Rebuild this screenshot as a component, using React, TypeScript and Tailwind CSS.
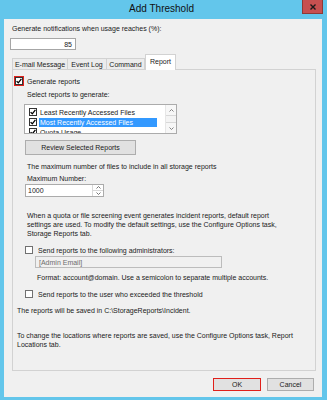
import React from 'react';

function Check({ red = false, checked = true }: { red?: boolean; checked?: boolean }) {
  return (
    <div
      className={
        'w-[8px] h-[8px] bg-white flex items-center justify-center shrink-0 ' +
        (red ? 'outline outline-[1.5px] outline-[#e0201b] border border-[#333]' : 'border border-[#333]')
      }
    >
      {checked && (
        <svg width="6" height="6" viewBox="0 0 6 6">
          <path d="M0.6 3.1 L2.3 4.8 L5.4 0.9" fill="none" stroke="#000" strokeWidth="1.3" />
        </svg>
      )}
    </div>
  );
}

function EmptyBox() {
  return <div className="w-[8px] h-[8px] bg-white border border-[#707070] shrink-0" />;
}

export default function App() {
  return (
    <div
      className="w-[327px] h-[400px] bg-[#63c6eb] flex flex-col text-[7px] text-[#1a1a1a] overflow-hidden"
      style={{ fontFamily: '"Liberation Sans", Arial, sans-serif' }}
    >
      {/* Title bar */}
      <div className="h-[19px] flex items-start shrink-0">
        <div className="flex-1" />
        <div className="text-[10px] leading-[18px] text-[#111]">Add Threshold</div>
        <div className="flex-1 flex justify-end pr-[4px]">
          <div className="w-[21px] h-[14px] bg-[#c75050] border border-[#8e3a36] border-t-0 flex items-center justify-center">
            <svg width="6" height="6" viewBox="0 0 6 6">
              <path d="M0.5 0.5 L5.5 5.5 M5.5 0.5 L0.5 5.5" stroke="#1a1a1a" strokeWidth="1.4" />
            </svg>
          </div>
        </div>
      </div>

      {/* Client area */}
      <div className="ml-[4px] mr-[5px] h-[378px] bg-[#f0f0f0] flex flex-col shrink-0">
        <div className="mt-[5px] ml-[8px] leading-[10px]">Generate notifications when usage reaches (%):</div>
        <div className="mt-[4px] ml-[6px] w-[66px] h-[12px] bg-white border border-[#a6a6a6] flex items-center justify-end pr-[3px] leading-none">
          85
        </div>

        {/* Tabs */}
        <div className="mt-[4px] ml-[8px] flex items-end h-[15px] relative z-10">
          <div className="w-[56px] h-[11px] border border-b-0 border-[#d2d2d2] bg-[#ececec] flex items-center justify-center leading-none">
            E-mail Message
          </div>
          <div className="w-[39px] h-[11px] border border-b-0 border-l-0 border-[#d2d2d2] bg-[#ececec] flex items-center justify-center leading-none">
            Event Log
          </div>
          <div className="w-[38px] h-[11px] border border-b-0 border-l-0 border-[#d2d2d2] bg-[#ececec] flex items-center justify-center leading-none">
            Command
          </div>
          <div className="w-[31px] h-[16px] -mb-px border border-b-0 border-[#d2d2d2] bg-white flex items-start justify-center pt-[3px] leading-none">
            Report
          </div>
        </div>

        {/* Tab panel */}
        <div className="ml-[8px] w-[304px] h-[302px] border border-[#d2d2d2] bg-[#f0f0f0] flex flex-col shrink-0">
          <div className="mt-[7px] ml-[2px] flex items-center h-[8px]">
            <Check red />
            <span className="ml-[4px] leading-none">Generate reports</span>
          </div>
          <div className="mt-[5px] ml-[14px] leading-[10px]">Select reports to generate:</div>

          {/* Report list */}
          <div className="mt-[4px] ml-[11px] w-[153px] h-[30px] bg-white border border-[#ababab] flex overflow-hidden">
            <div className="flex-1 pt-[2px] flex flex-col">
              {[
                { label: 'Least Recently Accessed Files', sel: false },
                { label: 'Most Recently Accessed Files', sel: true },
                { label: 'Quota Usage', sel: false },
              ].map((r) => (
                <div key={r.label} className="h-[10px] flex items-center shrink-0">
                  <div className="ml-[4px]">
                    <Check />
                  </div>
                  <span
                    className={
                      'ml-[2px] h-[9px] flex items-center px-[1px] leading-none ' +
                      (r.sel ? 'bg-[#3399ff] text-white w-[118px]' : '')
                    }
                  >
                    {r.label}
                  </span>
                </div>
              ))}
            </div>
            <div className="w-[11px] border-l border-[#e6e6e6] flex flex-col bg-[#f4f4f4]">
              <div className="h-[11px] border-b border-[#d8d8d8] bg-[#f7f7f7] flex items-center justify-center">
                <svg width="5" height="3" viewBox="0 0 5 3">
                  <path d="M0.5 2.5 L2.5 0.5 L4.5 2.5" fill="none" stroke="#777" strokeWidth="0.9" />
                </svg>
              </div>
              <div className="flex-1" />
              <div className="h-[11px] border-t border-[#d8d8d8] bg-[#f7f7f7] flex items-center justify-center">
                <svg width="5" height="3" viewBox="0 0 5 3">
                  <path d="M0.5 0.5 L2.5 2.5 L4.5 0.5" fill="none" stroke="#777" strokeWidth="0.9" />
                </svg>
              </div>
            </div>
          </div>

          <div className="mt-[6px] ml-[12px] w-[111px] h-[15px] bg-[#e1e1e1] border border-[#adadad] flex items-center justify-center leading-none">
            Review Selected Reports
          </div>

          <div className="mt-[7px] ml-[14px] leading-[10px]">The maximum number of files to include in all storage reports</div>
          <div className="mt-[2px] ml-[14px] leading-[10px]">Maximum Number:</div>
          <div className="ml-[12px] w-[79px] h-[13px] bg-white border border-[#ababab] flex">
            <div className="flex-1 flex items-center pl-[2px] leading-none">1000</div>
            <div className="w-[11px] border-l border-[#d8d8d8] flex flex-col">
              <div className="flex-1 border-b border-[#d8d8d8] flex items-center justify-center">
                <svg width="5" height="3" viewBox="0 0 5 3">
                  <path d="M0.5 2.5 L2.5 0.5 L4.5 2.5" fill="none" stroke="#666" strokeWidth="0.9" />
                </svg>
              </div>
              <div className="flex-1 flex items-center justify-center">
                <svg width="5" height="3" viewBox="0 0 5 3">
                  <path d="M0.5 0.5 L2.5 2.5 L4.5 0.5" fill="none" stroke="#666" strokeWidth="0.9" />
                </svg>
              </div>
            </div>
          </div>

          <div className="mt-[14px] ml-[14px] leading-[9px]">
            When a quota or file screening event generates incident reports, default report
            <br />
            settings are used. To modify the default settings, use the Configure Options task,
            <br />
            Storage Reports tab.
          </div>

          <div className="mt-[8px] ml-[12px] flex items-center h-[8px]">
            <EmptyBox />
            <span className="ml-[5px] leading-none">Send reports to the following administrators:</span>
          </div>
          <div className="mt-[2px] ml-[22px] w-[187px] h-[12px] bg-[#f0f0f0] border border-[#bcbcbc] flex items-center pl-[3px] leading-none text-[#6d6d6d]">
            [Admin Email]
          </div>
          <div className="mt-[5px] ml-[24px] leading-[10px]">
            Format: account@domain. Use a semicolon to separate multiple accounts.
          </div>
          <div className="mt-[7px] ml-[12px] flex items-center h-[8px]">
            <EmptyBox />
            <span className="ml-[5px] leading-none">Send reports to the user who exceeded the threshold</span>
          </div>

          <div className="mt-[8px] ml-[4px] leading-[10px]">The reports will be saved in C:\StorageReports\Incident.</div>
          <div className="mt-[15px] ml-[4px] leading-[9px]">
            To change the locations where reports are saved, use the Configure Options task, Report
            <br />
            Locations tab.
          </div>
        </div>

        {/* Buttons */}
        <div className="mt-[7px] mr-[8px] flex justify-end gap-[6px]">
          <div className="w-[48px] h-[13px] border-[1.5px] border-[#e0201b] bg-[#e1e1e1] flex items-center justify-center leading-none">
            OK
          </div>
          <div className="w-[47px] h-[13px] border border-[#adadad] bg-[#e1e1e1] flex items-center justify-center leading-none">
            Cancel
          </div>
        </div>
      </div>
    </div>
  );
}
